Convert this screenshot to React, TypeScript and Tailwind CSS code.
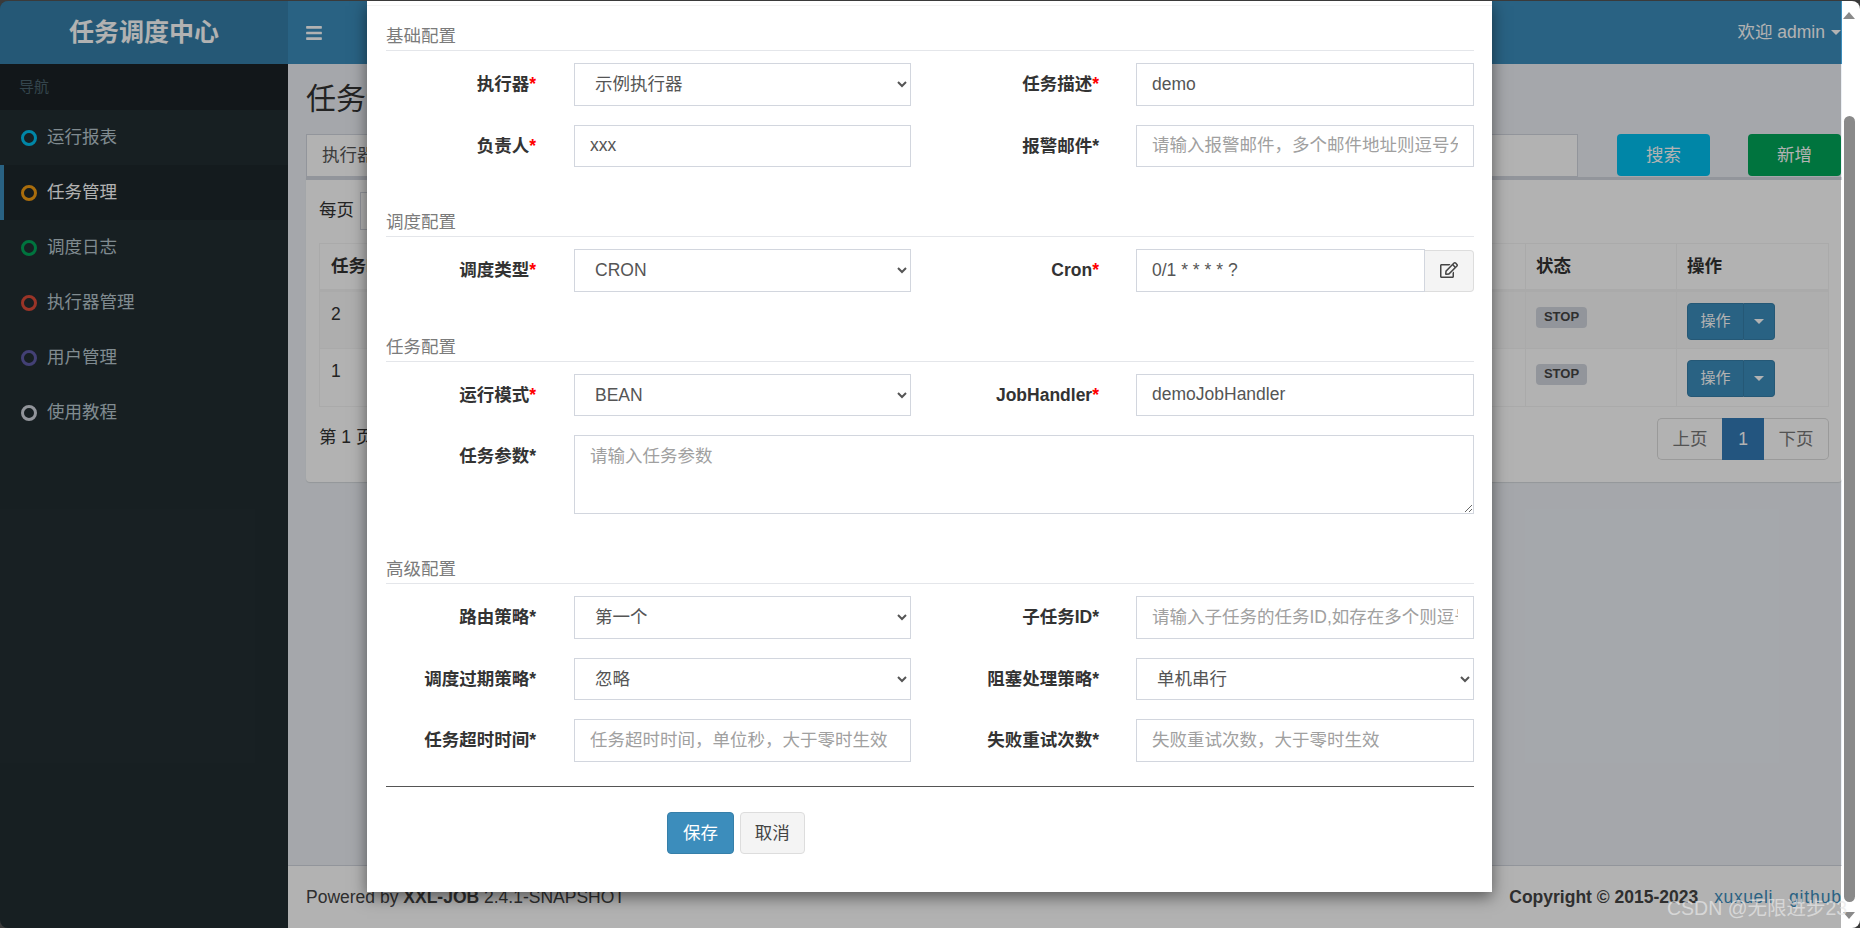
import React from "react";
import { FaBars, FaRegEdit } from "react-icons/fa";

const nav = [
  { label: "运行报表", ring: "border-[#00c0ef]" },
  { label: "任务管理", ring: "border-[#f39c12]", active: true },
  { label: "调度日志", ring: "border-[#00a65a]" },
  { label: "执行器管理", ring: "border-[#dd4b39]" },
  { label: "用户管理", ring: "border-[#605ca8]" },
  { label: "使用教程", ring: "border-[#d2d6de]" },
];

function Caret({ className }: { className: string }) {
  return <span className={"inline-block w-0 h-0 border-x-[5px] border-x-transparent border-t-[5px] " + className} />;
}

function Label({ text, red, wide }: { text: string; red?: boolean; wide?: boolean }) {
  return (
    <label className={(wide ? "w-[188px] mr-[37px]" : "w-[150px] mr-[38px]") + " shrink-0 text-right font-bold text-[#333333] leading-[42px]"}>
      {text}
      <span className={red ? "text-[#ff0000]" : ""}>*</span>
    </label>
  );
}

const control =
  "shrink-0 h-[42.5px] bg-white border border-[#d2d6de] text-[17.5px] text-[#555555] outline-none placeholder:text-[#a0a0a0]";

function Select({ value, wide }: { value: string; wide?: boolean }) {
  return (
    <select defaultValue={value} className={control + " pl-[16px] " + (wide ? "w-[338px]" : "w-[337px]")}>
      <option>{value}</option>
    </select>
  );
}

function Input({ value, placeholder, wide }: { value?: string; placeholder?: string; wide?: boolean }) {
  return (
    <input
      readOnly
      defaultValue={value}
      placeholder={placeholder}
      className={control + " px-[15px] " + (wide ? "w-[338px]" : "w-[337px]")}
    />
  );
}

function SectionTitle({ text, first }: { text: string; first?: boolean }) {
  return (
    <div className={(first ? "mt-[20px]" : "mt-[45px]") + " h-[25px] mb-[12px] border-b border-[#e4e6ea] text-[#7b7b7b] leading-[21px]"}>
      {text}
    </div>
  );
}

function Row({ children }: { children: React.ReactNode }) {
  return <div className="flex h-[42.5px]">{children}</div>;
}

function Modal() {
  return (
    <div className="absolute left-[367px] top-0 w-[1125px] h-[891px] bg-white shadow-[0_5px_15px_rgba(0,0,0,0.5)]">
      <div className="h-[5px] border-b border-[#f4f4f4]" />
      <div className="pl-[19px] pr-[18px]">
        <SectionTitle text="基础配置" first />
        <div className="flex flex-col gap-[19px]">
          <Row>
            <Label text="执行器" red />
            <Select value="示例执行器" />
            <Label text="任务描述" red wide />
            <Input value="demo" wide />
          </Row>
          <Row>
            <Label text="负责人" red />
            <Input value="xxx" />
            <Label text="报警邮件" wide />
            <Input placeholder="请输入报警邮件，多个邮件地址则逗号分隔" wide />
          </Row>
        </div>

        <SectionTitle text="调度配置" />
        <Row>
          <Label text="调度类型" red />
          <Select value="CRON" />
          <Label text="Cron" red wide />
          <div className="flex w-[338px] shrink-0">
            <input
              readOnly
              defaultValue="0/1 * * * * ?"
              className={control + " px-[15px] w-[289px]"}
            />
            <span className="flex-1 h-[42px] mt-px flex items-center justify-center bg-[#f4f4f4] border border-l-0 border-[#dddddd] rounded-r-[4px] text-[#444444]">
              <FaRegEdit className="w-[18px] h-[16px] -mt-[2px]" />
            </span>
          </div>
        </Row>

        <SectionTitle text="任务配置" />
        <Row>
          <Label text="运行模式" red />
          <Select value="BEAN" />
          <Label text="JobHandler" red wide />
          <Input value="demoJobHandler" wide />
        </Row>
        <div className="flex mt-[19px]">
          <Label text="任务参数" />
          <textarea
            readOnly
            placeholder="请输入任务参数"
            className="shrink-0 w-[900px] h-[79px] px-[15px] py-[7px] bg-white border border-[#d2d6de] text-[17.5px] text-[#555555] outline-none placeholder:text-[#a0a0a0]"
          />
        </div>

        <SectionTitle text="高级配置" />
        <div className="flex flex-col gap-[19px]">
          <Row>
            <Label text="路由策略" />
            <Select value="第一个" />
            <Label text="子任务ID" wide />
            <Input placeholder="请输入子任务的任务ID,如存在多个则逗号分隔" wide />
          </Row>
          <Row>
            <Label text="调度过期策略" />
            <Select value="忽略" />
            <Label text="阻塞处理策略" wide />
            <Select value="单机串行" wide />
          </Row>
          <Row>
            <Label text="任务超时时间" />
            <Input placeholder="任务超时时间，单位秒，大于零时生效" />
            <Label text="失败重试次数" wide />
            <Input placeholder="失败重试次数，大于零时生效" wide />
          </Row>
        </div>

        <div className="mt-[24px] border-t border-[#555555]" />
        <div className="mt-[25px] ml-[281px] flex gap-[5.5px]">
          <button className="w-[67px] h-[42.5px] rounded-[4px] bg-[#3c8dbc] border border-[#367fa9] text-white">保存</button>
          <button className="w-[65.5px] h-[42.5px] rounded-[4px] bg-[#f4f4f4] border border-[#dddddd] text-[#444444]">取消</button>
        </div>
      </div>
    </div>
  );
}

function SplitButton() {
  return (
    <div className="flex w-[88px] h-[37px] text-[15px] text-white">
      <span className="w-[57px] flex items-center justify-center bg-[#3c8dbc] border border-[#367fa9] rounded-l-[4px]">操作</span>
      <span className="flex-1 flex items-center justify-center bg-[#3c8dbc] border border-l-0 border-[#367fa9] rounded-r-[4px]">
        <Caret className="border-t-white" />
      </span>
    </div>
  );
}

function StopBadge() {
  return (
    <span className="block w-[51px] h-[21px] rounded-[4px] bg-[#d2d6de] text-[#444444] text-[13px] font-bold leading-[20px] text-center">
      STOP
    </span>
  );
}

function Page() {
  return (
    <div className="relative w-[1841px] h-full flex shrink-0">
      <aside className="w-[288px] shrink-0 flex flex-col bg-[#222d32]">
        <div className="h-[63px] flex items-center justify-center bg-[#367fa9] text-white text-[25px] font-bold">任务调度中心</div>
        <div className="h-[46px] pl-[19px] flex items-center bg-[#1a2226] text-[#4b646f] text-[15px]">导航</div>
        {nav.map((n) => (
          <div
            key={n.label}
            className={
              "h-[55px] flex items-center border-l-[4px] pl-[17px] gap-[10px] " +
              (n.active ? "bg-[#1e282c] border-[#3c8dbc] text-white" : "border-transparent text-[#b8c7ce]")
            }
          >
            <span className={"w-[16px] h-[16px] rounded-full border-[3px] " + n.ring} />
            {n.label}
          </div>
        ))}
      </aside>

      <main className="flex-1 flex flex-col bg-[#ecf0f5]">
        <header className="h-[63px] shrink-0 flex items-center bg-[#3c8dbc] pl-[18px] text-white">
          <FaBars className="w-[16px] h-[18px]" />
          <div className="ml-auto mr-[1px] flex items-center gap-[6px]">
            <span>欢迎 admin</span>
            <Caret className="border-t-white" />
          </div>
        </header>

        <div className="pl-[18px] pt-[17px] flex-1 flex flex-col">
          <h1 className="text-[30px] leading-[36px] text-[#333333] h-[36px] mb-[17px]">任务调度管理</h1>
          <div className="flex h-[43px]">
            <div className="w-[1272px] border border-[#d2d6de] bg-white pl-[15px] leading-[41px] text-[#555555]">执行器</div>
            <span className="ml-[39px] w-[93px] h-[42px] flex items-center justify-center rounded-[4px] bg-[#00c0ef] text-white">搜索</span>
            <span className="ml-[38px] w-[93px] h-[42px] flex items-center justify-center rounded-[4px] bg-[#00a65a] text-white">新增</span>
          </div>

          <section className="h-[305px] border-t-[3px] border-[#d2d6de] bg-white rounded-b-[4px] px-[13px] pt-[12px] shadow-[0_1px_1px_rgba(0,0,0,0.1)] text-[#333333]">
            <div className="h-[38px] flex items-center gap-[6px]">
              <span className="-mt-[2px]">每页</span>
              <span className="w-[60px] h-[38px] border border-[#d2d6de]" />
            </div>
            <table className="mt-[13px] w-[1509px] table-fixed border-collapse border border-[#f4f4f4]">
              <colgroup>
                <col className="w-[100px]" />
                <col className="w-[1106px]" />
                <col className="w-[151px]" />
                <col className="w-[152px]" />
              </colgroup>
              <thead>
                <tr className="h-[47px] text-left">
                  <th className="px-[11px] border border-b-[3px] border-[#f4f4f4] font-bold">任务ID</th>
                  <th className="border border-b-[3px] border-[#f4f4f4]" />
                  <th className="px-[10px] border border-b-[3px] border-[#f4f4f4] font-bold">状态</th>
                  <th className="px-[10px] border border-b-[3px] border-[#f4f4f4] font-bold">操作</th>
                </tr>
              </thead>
              <tbody>
                {["2", "1"].map((id, i) => (
                  <tr key={id} className={"h-[58px] " + (i === 0 ? "bg-[#f9f9f9]" : "")}>
                    <td className="px-[11px] pt-[12px] align-top leading-[20px] border border-[#f4f4f4]">{id}</td>
                    <td className="border border-[#f4f4f4]" />
                    <td className="px-[10px] pt-[15px] align-top border border-[#f4f4f4]">
                      <StopBadge />
                    </td>
                    <td className="px-[10px] pt-[11px] align-top border border-[#f4f4f4]">
                      <SplitButton />
                    </td>
                  </tr>
                ))}
              </tbody>
            </table>
            <div className="mt-[11px] flex items-start justify-between">
              <span className="leading-[38px]">第 1 页</span>
              <div className="flex h-[42px] w-[172px]">
                <span className="w-[65px] flex items-center justify-center border border-r-0 border-[#dddddd] rounded-l-[5px] text-[#777777]">上页</span>
                <span className="w-[42px] flex items-center justify-center bg-[#337ab7] text-white">1</span>
                <span className="w-[65px] flex items-center justify-center border border-l-0 border-[#dddddd] rounded-r-[5px] text-[#777777]">下页</span>
              </div>
            </div>
          </section>
        </div>

        <footer className="h-[63px] shrink-0 flex items-center justify-between pl-[18px] bg-white border-t border-[#d2d6de] text-[#444444]">
          <span>
            Powered by <b className="font-bold">XXL-JOB</b> 2.4.1-SNAPSHOT
          </span>
          <span className="flex">
            <b className="font-bold mr-[16px]">Copyright © 2015-2023</b>
            <span className="text-[#3c8dbc] mr-[16px] tracking-[0.6px]">xuxueli</span>
            <span className="text-[#3c8dbc] tracking-[0.9px]">github</span>
          </span>
        </footer>
      </main>

      <div className="absolute inset-0 bg-black/30" />
      <Modal />
    </div>
  );
}

function Scrollbar() {
  return (
    <div className="w-[19px] h-full shrink-0 bg-white flex flex-col items-center pl-[1px] pr-[4px]">
      <span className="mt-[11px] w-0 h-0 border-x-[6px] border-x-transparent border-b-[7px] border-b-[#8a8a8a]" />
      <span className="mt-[97px] w-[11px] h-[786px] rounded-full bg-[#8a8a8a]" />
      <span className="mt-[10px] w-0 h-0 border-x-[6px] border-x-transparent border-t-[7px] border-t-[#8a8a8a]" />
    </div>
  );
}

export default function App() {
  return (
    <div
      className="relative w-[1860px] h-[928px] overflow-hidden bg-[#3a3a3a] pt-px text-[17.5px]"
      style={{ fontFamily: '"Liberation Sans","Noto Sans CJK SC",sans-serif' }}
    >
      <div className="flex h-[927px] rounded-[8px] overflow-hidden">
        <Page />
        <Scrollbar />
      </div>
      <span className="absolute left-[1667px] top-[897px] text-[#e8e8e8]/70 text-[19.5px] leading-[22px]">CSDN @无限进步23</span>
    </div>
  );
}
